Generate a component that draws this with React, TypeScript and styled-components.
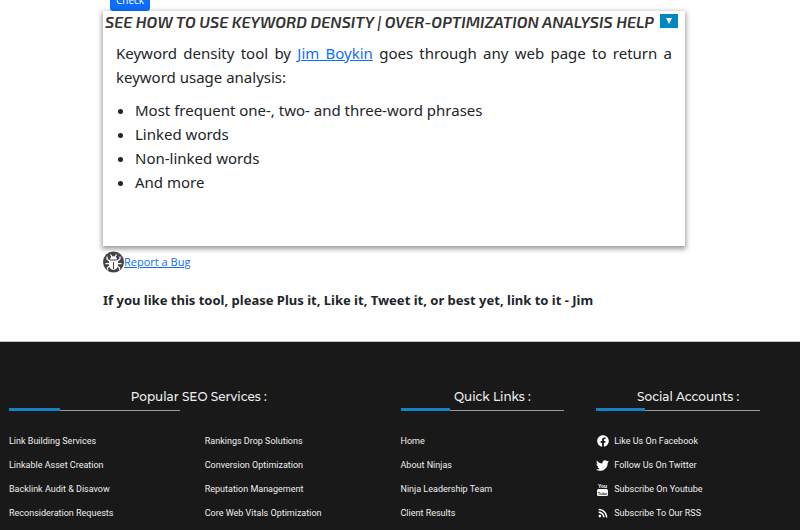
import React from "react";
import styled, { createGlobalStyle } from "styled-components";
import { FaFacebook, FaTwitter, FaRss } from "react-icons/fa";

const GlobalStyle = createGlobalStyle`
  *, *::before, *::after { box-sizing: border-box; }
  body {
    margin: 0;
    background: #fff;
    color: #212529;
    font-family: "Noto Sans", "Open Sans", sans-serif;
    font-size: 15px;
    line-height: 24px;
  }
  h2, h3, p, ul { margin: 0; padding: 0; }
  a { color: #0d6efd; }
`;

const Page = styled.div`
  overflow-x: hidden;
`;

const Main = styled.main`
  padding: 0 115px 29px 103px;
`;

const CheckButton = styled.button`
  display: block;
  width: 40px;
  height: 22px;
  margin: -11px 0 0 7px;
  padding: 0;
  border: 0;
  border-radius: 3px;
  background: #0d6efd;
  color: #fff;
  font: 10px/22px "Open Sans", sans-serif;
`;

const Card = styled.section`
  min-height: 235px;
  margin-bottom: 5px;
  background: #fff;
  box-shadow: 0 2px 5px 1px rgba(0, 0, 0, 0.4);
`;

const CardHeader = styled.div`
  display: flex;
  align-items: flex-start;
  justify-content: space-between;
  padding: 3px 7px 0 2px;
`;

const CardTitle = styled.h2`
  color: #333;
  font: italic 600 16px/16px "Exo 2", Exo, Roboto, sans-serif;
  white-space: nowrap;
`;

const ToggleButton = styled.button`
  display: flex;
  align-items: center;
  justify-content: center;
  width: 18px;
  height: 14px;
  padding: 0;
  border: 0;
  background: #0088c2;
`;

const CardBody = styled.div`
  padding: 11px 13px 0;
`;

const Intro = styled.p`
  text-align: justify;
`;

const Features = styled.ul`
  && {
    margin-top: 9px;
    padding-left: 19px;
  }
`;

const BugLink = styled.a`
  display: flex;
  align-items: center;
  width: fit-content;
  font-family: "Open Sans", sans-serif;
  font-size: 11px;
  line-height: 22px;
`;

const Plea = styled.p`
  margin-top: 15px;
  font-size: 13px;
  font-weight: 700;
`;

const Footer = styled.footer`
  display: grid;
  grid-template-columns: repeat(4, 1fr);
  column-gap: 12px;
  padding: 46px 20px 20px 9px;
  border-top: 1px solid #c4c4c4;
  background: #191919;
  color: #fff;
  font-family: Roboto, sans-serif;
  font-size: 9px;
`;

const FooterGroup = styled.section<{ $span?: number }>`
  grid-column: span ${(p) => p.$span ?? 1};
`;

const FooterTitle = styled.h3`
  color: #eee;
  font: 500 12px/18px "Montserrat", Inter, sans-serif;
  text-align: center;
`;

const Rule = styled.div<{ $width: number }>`
  width: ${(p) => p.$width}%;
  height: 3px;
  margin: 2px 0 18px;
  border-bottom: 1px solid #999;

  &::before {
    content: "";
    display: block;
    width: 30%;
    height: 3px;
    background: #1482c0;
  }
`;

const Columns = styled.div<{ $count: number }>`
  display: grid;
  grid-template-columns: repeat(${(p) => p.$count}, 1fr);
  column-gap: 12px;
`;

const LinkList = styled.ul`
  list-style: none;
`;

const FooterLink = styled.a`
  display: flex;
  align-items: center;
  gap: 5px;
  color: #eee;
  text-decoration: none;
  white-space: nowrap;
`;

const IconSlot = styled.span`
  display: flex;
  justify-content: center;
  width: 13px;
  color: #fff;
`;

const BugIcon = () => (
  <svg width="21" height="22" viewBox="0 0 42 44" aria-hidden="true">
    <circle cx="21" cy="22" r="21" fill="#444" />
    <g fill="none" stroke="#fff" strokeWidth="2.5">
      <path d="M15 7l3 5M27 7l-3 5M14 21L8 16v-5M28 21l6-5v-5M13 25H5M29 25h8M14 30l-5 3v5M28 30l5 3v5" />
    </g>
    <path d="M14 17c0-9 14-9 14 0z" fill="#fff" />
    <path d="M12 19h18v8c0 14-18 14-18 0z" fill="#fff" />
    <path d="M21 22v14" stroke="#444" strokeWidth="2" />
  </svg>
);

const YoutubeIcon = () => (
  <svg width="13" height="13" viewBox="0 0 13 13" aria-hidden="true">
    <text x="6.5" y="4.5" textAnchor="middle" fontFamily="Liberation Sans, sans-serif" fontWeight="700" fontSize="5" fill="#fff">You</text>
    <rect x="1" y="6" width="11" height="7" rx="1.5" fill="#fff" />
    <text x="6.5" y="11.5" textAnchor="middle" fontFamily="Liberation Sans, sans-serif" fontWeight="700" fontSize="4" fill="#191919">Tube</text>
  </svg>
);

type Item = { label: string; icon?: React.ReactNode };

const Links = ({ items }: { items: Item[] }) => (
  <LinkList>
    {items.map((item) => (
      <li key={item.label}>
        <FooterLink href="#">
          {item.icon && <IconSlot>{item.icon}</IconSlot>}
          {item.label}
        </FooterLink>
      </li>
    ))}
  </LinkList>
);

const toItems = (labels: string[]): Item[] => labels.map((label) => ({ label }));

const services = toItems(["Link Building Services", "Linkable Asset Creation", "Backlink Audit & Disavow", "Reconsideration Requests"]);
const moreServices = toItems(["Rankings Drop Solutions", "Conversion Optimization", "Reputation Management", "Core Web Vitals Optimization"]);
const quickLinks = toItems(["Home", "About Ninjas", "Ninja Leadership Team", "Client Results"]);
const social: Item[] = [
  { label: "Like Us On Facebook", icon: <FaFacebook size={12} /> },
  { label: "Follow Us On Twitter", icon: <FaTwitter size={13} /> },
  { label: "Subscribe On Youtube", icon: <YoutubeIcon /> },
  { label: "Subscribe To Our RSS", icon: <FaRss size={10} /> },
];

export default function App() {
  return (
    <Page>
      <GlobalStyle />
      <Main>
        <CheckButton type="button">Check</CheckButton>
        <Card>
          <CardHeader>
            <CardTitle>SEE HOW TO USE KEYWORD DENSITY | OVER-OPTIMIZATION ANALYSIS HELP</CardTitle>
            <ToggleButton type="button" aria-label="Toggle help">
              <svg width="8" height="6" viewBox="0 0 8 6" aria-hidden="true">
                <path d="M1 0h6L4 6z" fill="#fff" />
              </svg>
            </ToggleButton>
          </CardHeader>
          <CardBody>
            <Intro>
              Keyword density tool by <a href="#">Jim Boykin</a> goes through any web page to return a keyword usage analysis:
            </Intro>
            <Features>
              <li>Most frequent one-, two- and three-word phrases</li>
              <li>Linked words</li>
              <li>Non-linked words</li>
              <li>And more</li>
            </Features>
          </CardBody>
        </Card>
        <BugLink href="#">
          <BugIcon />
          Report a Bug
        </BugLink>
        <Plea>If you like this tool, please Plus it, Like it, Tweet it, or best yet, link to it - Jim</Plea>
      </Main>
      <Footer>
        <FooterGroup $span={2}>
          <FooterTitle>Popular SEO Services :</FooterTitle>
          <Rule $width={45} />
          <Columns $count={2}>
            <Links items={services} />
            <Links items={moreServices} />
          </Columns>
        </FooterGroup>
        <FooterGroup>
          <FooterTitle>Quick Links :</FooterTitle>
          <Rule $width={89} />
          <Links items={quickLinks} />
        </FooterGroup>
        <FooterGroup>
          <FooterTitle>Social Accounts :</FooterTitle>
          <Rule $width={89} />
          <Links items={social} />
        </FooterGroup>
      </Footer>
    </Page>
  );
}
